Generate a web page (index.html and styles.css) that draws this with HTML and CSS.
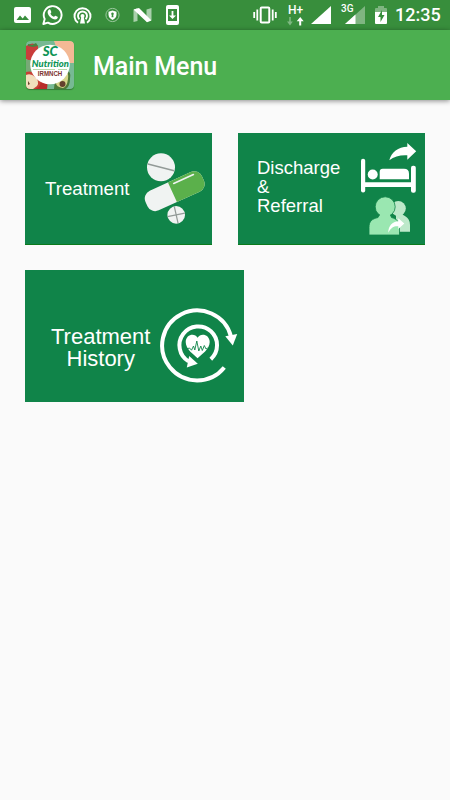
FILE: index.html
```html
<!DOCTYPE html>
<html lang="en">
<head>
	<meta charset="utf-8">
	<title>Main Menu</title>
	<link rel="stylesheet" href="styles.css">
</head>
<body>

	<!-- status bar -->
	<div class="status">
		<svg class="cell" viewBox="0 0 30 30">
			<rect x="7" y="7" width="17" height="16" rx="2" fill="#fff"/>
			<path d="M9.500 20l3.500-4.500 2.700 3 2.300-3 4 4.500z" fill="#388e3c"/>
		</svg>
		<svg class="cell" viewBox="0 0 30 30">
			<path d="M6.300 24l1.400-5A8.900 8.900 0 1 1 11 22.600z" fill="none" stroke="#fff" stroke-width="1.900" stroke-linejoin="round"/>
			<path d="M11.500 10c.8-.9 1.700-.8 2 0l.8 2c.2.500-.9 1.300-.8 1.700.7 1.500 1.900 2.500 3.300 3.100.5.100 1.100-1.300 1.600-1.100l2.200 1.100c.7.500-.2 2.100-1.300 2.500-1.700.6-4.400-.6-6.400-2.600s-3.100-4.700-1.400-6.700z" fill="#fff"/>
		</svg>
		<svg class="cell" viewBox="0 0 30 30">
			<g fill="none" stroke="#fff" stroke-width="1.900">
				<path d="M11 22.800a8 8 0 1 1 9 0"/>
				<path d="M12.400 19.200a4.500 4.500 0 1 1 6.200 0"/>
			</g>
			<circle cx="15.500" cy="15.900" r="2" fill="#fff"/>
			<path d="M14.500 16h2l1.500 7.500h-5z" fill="#fff"/>
		</svg>
		<svg class="cell" viewBox="0 0 30 30">
			<circle cx="15.500" cy="15" r="6.600" fill="none" stroke="#9cc99f" stroke-width="1"/>
			<path d="M15.500 10.500l4 1.300v3c0 2.500-2 4.200-4 5.200-2-1-4-2.700-4-5.200v-3z" fill="#fff"/>
			<path d="M15.500 12.600a1.300 1.300 0 0 1 .7 2.400l.3 2.300h-2l.3-2.300a1.300 1.300 0 0 1 .7-2.400z" fill="#388e3c"/>
		</svg>
		<svg class="cell" viewBox="0 0 30 30">
			<path d="M6.500 10l4-2v13l-4 1zM19.500 9.500l5-1.500v12l-5 2z" fill="#a9d0ab"/>
			<path d="M6.500 9.500L12 8l12.500 12.500-4.500 1.700z" fill="#fff"/>
		</svg>
		<svg class="cell" viewBox="0 0 30 30">
			<rect x="9" y="5" width="13" height="20" rx="2" fill="#fff"/>
			<path d="M11 9h9v12h-9z" fill="#388e3c"/>
			<path d="M14.600 11h1.800v4.500H19L15.500 19 12 15.500h2.600z" fill="#fff"/>
		</svg>
		<svg class="cell vibrate" viewBox="0 0 30 30">
			<rect x="10.700" y="7.500" width="8.600" height="15" rx="1" fill="none" stroke="#fff" stroke-width="2"/>
			<path d="M7.300 9.500v11M22.700 9.500v11M4.200 12v6M25.800 12v6" stroke="#fff" stroke-width="1.800"/>
		</svg>
		<div class="data">
			<span>H+</span>
			<svg viewBox="0 0 18 9">
				<path d="M2.200 0h1.600v4.500h2L3 8.500 0 4.500h2.200z" fill="#7fb882"/>
				<path d="M12.200 8.500h2V4.300h2.500L13.200 0 9.700 4.300h2.500z" fill="#fff"/>
			</svg>
		</div>
		<svg class="signal" viewBox="0 0 20 18"><path d="M0 18L20 0v18z" fill="#fff"/></svg>
		<span class="net">3G</span>
		<svg class="signal weak" viewBox="0 0 20 18">
			<path d="M0 18L20 0v18z" fill="#7fb581"/>
			<path d="M0 18l10.500-9.500V18z" fill="#fff"/>
		</svg>
		<svg class="battery" viewBox="0 0 12 18">
			<path d="M0 3q0-1 1-1h2V0h6v2h2q1 0 1 1v3H0z" fill="#7fb581"/>
			<path d="M0 6h12v11q0 1-1 1H1q-1 0-1-1z" fill="#fff"/>
			<path d="M7 4L3 11h2.500v5L9.500 9H7z" fill="#388e3c"/>
		</svg>
		<span class="time">12:35</span>
	</div>

	<!-- app bar -->
	<div class="bar">
		<svg class="logo" viewBox="0 0 48 48">
			<defs><clipPath id="tile"><rect width="48" height="48" rx="4"/></clipPath></defs>
			<g clip-path="url(#tile)">
				<rect width="48" height="48" fill="#77b994"/>
				<path d="M28 0h20v22H36z" fill="#f3b995"/>
				<path d="M0 5q7-5 12 0 1 10-7 15l-5-2z" fill="#c93d3b"/>
				<path d="M2 3l4 1 4-2 2 3-5 1-5-1z" fill="#47843f"/>
				<path d="M0 19h6v12H0z" fill="#78a976"/>
				<path d="M14 36q9 2 7 12H9z" fill="#b82c2b"/>
				<path d="M0 31q6-2 11 3 6 4 3 10-2 4-6 4H0z" fill="#c84035"/>
				<path d="M0 34q5-2 9 2 5 4 2 9l-4 3H0z" fill="#f1dfbd"/>
				<path d="M2 40l2 3-2 1z" fill="#69452f"/>
				<path d="M39 29q7 1 5 9 0 7-4 10H28q0-9 7-13z" fill="#4d7a39"/>
				<path d="M40 31q3 1 2 7-1 8-5 9-7-1-7-5 2-3 6-5z" fill="#d5d58b"/>
				<circle cx="36.500" cy="43" r="3" fill="#64402d"/>
				<circle cx="24" cy="23.500" r="19.800" fill="#fff"/>
			</g>
			<path d="M7 28.500h22M32 28.500h9" stroke="#a7cf94" stroke-width=".8"/>
			<text class="logo-sc" x="24.200" y="15" text-anchor="middle" textLength="15" lengthAdjust="spacingAndGlyphs">SC</text>
			<text class="logo-name" x="24.300" y="25.500" text-anchor="middle" textLength="37" lengthAdjust="spacingAndGlyphs">Nutrition</text>
			<text class="logo-org" x="24" y="35.300" text-anchor="middle" textLength="24.500" lengthAdjust="spacingAndGlyphs">IRMNCH</text>
		</svg>
		<h1>Main Menu</h1>
	</div>

	<!-- menu tiles -->
	<div class="menu">
		<a class="tile">
			<span>Treatment</span>
			<svg class="pills" viewBox="143 151 64 75">
				<circle cx="161" cy="167.300" r="14" fill="#f0f3f2"/>
				<path d="M147.900 164l26.300 6.700" stroke="#929a97" stroke-width="1.400"/>
				<g transform="rotate(-24.500 174.700 191.200)">
					<rect x="143.700" y="180.400" width="62" height="21.600" rx="8.500" fill="#f0f3f2"/>
					<path d="M172.200 180.400h25a8.500 8.500 0 0 1 8.500 8.500v4.600a8.500 8.500 0 0 1-8.500 8.500h-25z" fill="#5bb04b"/>
				</g>
				<path d="M173.700 183.500l19.700-9" stroke="#f0f3f2" stroke-width="1.600" stroke-linecap="round"/>
				<circle cx="176.200" cy="214.900" r="8.800" fill="#f0f3f2"/>
				<path d="M167.600 216.700l17.200-3.600M174.300 206.500l3.800 16.900" stroke="#929a97" stroke-width="1.200"/>
			</svg>
		</a>
		<a class="tile discharge">
			<span>Discharge<br>&amp;<br>Referral</span>
			<svg class="bed" viewBox="360 142 57 94">
				<path d="M389.300 160.300c2-8 9-13.300 18-13.500V143l8.900 8.200-8.900 8.500v-4.500c-7-.4-13 1-18 5.100z" fill="#fff"/>
				<g fill="#fff">
					<rect x="361" y="158.700" width="4.200" height="33.700" rx="2"/>
					<rect x="411" y="165.700" width="4.800" height="27" rx="2"/>
					<path d="M363 182.300h50v4.800h-50z"/>
					<circle cx="372.700" cy="174.500" r="5"/>
					<path d="M379.700 179.300v-7.600q0-3 3-3H404q5 0 5 5v5.600z"/>
				</g>
				<g fill="#bde9ca">
					<circle cx="398.300" cy="208.500" r="7.500"/>
					<path d="M396 213h6c0 3 8 3 8 12v6.700h-14z"/>
				</g>
				<path d="M380 214h10l1.500 3.500c5 1.500 8 3.500 8 10V235H369v-7.500c0-6.500 3-8.500 9-10z" fill="#9ae7b1" stroke="#108449" stroke-width=".8"/>
				<circle cx="385.200" cy="206.800" r="10" fill="#9ae7b1" stroke="#108449" stroke-width=".8"/>
				<path d="M380 212h10v6h-10z" fill="#9ae7b1"/>
				<path d="M388.300 232.800c0-7 4-11 10-11.500v-3.100l6 5.200-6 5.500v-2.600c-4.500-.3-7.500 1.500-10 6.500z" fill="#fff"/>
			</svg>
		</a>
		<a class="tile history">
			<span>Treatment<br>History</span>
			<svg class="cycle" viewBox="159 307 79 76">
				<g fill="none" stroke="#fff" stroke-width="4">
					<path d="M231 336.500A35 35 0 1 0 224.300 367.500"/>
					<path d="M188.500 361.300A18.800 18.800 0 1 1 210.800 359.200"/>
				</g>
				<g fill="#fff">
					<path d="M225.300 336.200l11.900-2.300-4.400 11.600z"/>
					<path d="M189.200 356l8.600 7.700-11 3.700z"/>
					<path d="M197.600 358.200c-4-3.700-11.900-9-11.900-16.200 0-7.500 9-9.600 11.900-4.200 3-5.400 12.100-3.300 12.100 4.200 0 7.200-8.100 12.500-12.100 16.200z"/>
				</g>
				<path d="M186.500 349l3-1 2 2.200 2-4.200 1.300 4 2-9 2 10 2-5 1.500 4.500 2-5 1.700 3.500 1.500-1" fill="none" stroke="#108449" stroke-width=".9"/>
			</svg>
		</a>
	</div>

</body>
</html>
```

FILE: styles.css
```css
*{
	margin: 0;
	padding: 0;
	box-sizing: border-box;
}
body{
	background: #fafafa;
	font-family: Roboto, sans-serif;
	color: #fff;
}
svg{
	display: block;
	flex: none;
}
.status{
	display: flex;
	align-items: center;
	height: 30px;
	padding-left: 7px;
	background: #388e3c;
}
.cell{
	width: 30px;
	height: 30px;
}
.vibrate{
	margin-left: 63px;
}
.data{
	width: 18px;
	height: 22px;
	margin-left: 7px;
	padding-left: 1px;
	font-size: 12px;
	font-weight: 500;
	line-height: 12px;
}
.data svg{
	width: 18px;
	height: 9px;
	margin: 1px 0 0 -1px;
}
.signal{
	width: 20px;
	height: 18px;
	margin-left: 6px;
}
.net{
	align-self: flex-start;
	width: 14px;
	margin: 3px 0 0 10px;
	font-size: 10px;
	font-weight: 500;
	line-height: 12px;
}
.weak{
	margin-left: -10px;
}
.battery{
	width: 12px;
	height: 18px;
	margin-left: 10px;
}
.time{
	margin-left: 8px;
	font-size: 18px;
	font-weight: 500;
	line-height: 32px;
}
.bar{
	display: flex;
	align-items: center;
	height: 70px;
	padding-left: 26px;
	background: #4caf50;
	box-shadow: 0 1px 5px rgba(0,0,0,.45);
}
.logo{
	width: 48px;
	height: 48px;
	border-radius: 4px;
	box-shadow: 0 1px 1px rgba(0,0,0,.3);
}
.logo-sc, .logo-name{
	font-family: Lato, sans-serif;
	font-style: italic;
	font-weight: 900;
	fill: #0d9455;
}
.logo-sc{
	font-size: 12.5px;
}
.logo-name{
	font-size: 9px;
}
.logo-org{
	font: bold 6.5px "Liberation Sans", Arial, sans-serif;
	fill: #7c332f;
}
h1{
	margin: 3px 0 0 19px;
	font-size: 25px;
	font-weight: 500;
	letter-spacing: -.1px;
}
.menu{
	display: flex;
	flex-wrap: wrap;
	gap: 25px 26px;
	padding: 33px 24px 0 25px;
	font-family: "Liberation Sans", Arial, sans-serif;
}
.tile{
	display: flex;
	justify-content: space-between;
	width: 187px;
	height: 112px;
	padding: 18px 5px 0 20px;
	background: #108449;
	border-bottom: 1px solid #0b7a1c;
	font-size: 18.7px;
	line-height: 19px;
}
.tile span{
	margin-top: 28px;
}
.pills{
	width: 64px;
	height: 75px;
}
.discharge{
	padding: 9px 8px 0 19px;
	font-size: 18.5px;
}
.discharge span{
	margin-top: 16px;
}
.bed{
	width: 57px;
	height: 94px;
}
.history{
	width: 219px;
	height: 132px;
	padding: 37px 6px 0 26px;
	border: 0;
	font-size: 22px;
	line-height: 22px;
	text-align: center;
}
.history span{
	margin-top: 19px;
}
.cycle{
	width: 79px;
	height: 76px;
}
```
